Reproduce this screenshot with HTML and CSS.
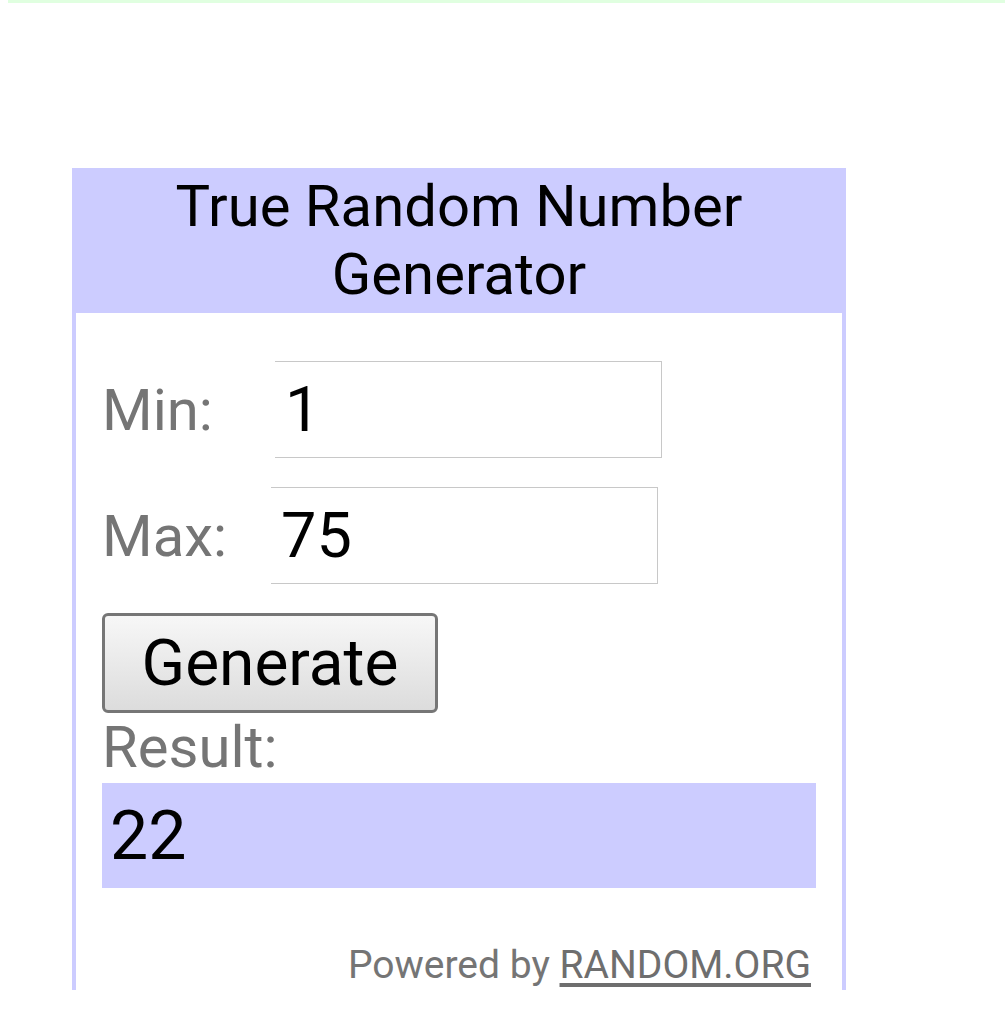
FILE: index.html
```html
<!DOCTYPE html>
<html lang="en">
<head>
    <meta charset="UTF-8">
    <meta name="viewport" content="width=device-width, initial-scale=1.0">
    <title>True Random Number Generator</title>
    <link rel="stylesheet" href="styles.css">
</head>
<body>
    <div class="top-strip"></div>
    <div class="widget">
        <div class="widget-header">True Random Number Generator</div>
        <div class="widget-body">
            <div class="field field-min">
                <label for="min">Min:</label>
                <input type="text" id="min" value="1">
            </div>
            <div class="field field-max">
                <label for="max">Max:</label>
                <input type="text" id="max" value="75">
            </div>
            <button class="generate">Generate</button>
            <div class="result-label">Result:</div>
            <div class="result">22</div>
            <div class="powered">Powered by <a href="#">RANDOM.ORG</a></div>
        </div>
    </div>
</body>
</html>
```

FILE: styles.css
```css
body {
    margin: 0;
    background-color: #ffffff;
    font-family: Roboto, 'Noto Sans', sans-serif;
    color: #000000;
}
.top-strip {
    height: 3px;
    margin-left: 8px;
    background-color: #e0ffe0;
}
.widget {
    width: 774px;
    height: 822px;
    margin: 165px 0 0 72px;
    box-sizing: border-box;
    border-left: 4px solid #ccccff;
    border-right: 4px solid #ccccff;
}
.widget-header {
    background-color: #ccccff;
    text-align: center;
    font-size: 58px;
    line-height: 68px;
    padding: 4px 20px 5px;
}
.widget-body {
    padding: 48px 26px 0;
}
.field {
    display: flex;
    align-items: center;
    margin-bottom: 29px;
}
.field label {
    color: #757575;
    font-size: 58px;
}
.field-min label {
    width: 173px;
}
.field-max label {
    width: 169px;
}
.field input {
    width: 387px;
    height: 97px;
    box-sizing: border-box;
    border: 1px solid #c8c8c8;
    border-left: none;
    padding: 0 10px;
    font-family: Roboto, 'Noto Sans', sans-serif;
    font-size: 63px;
    color: #000000;
    outline: none;
}
.generate {
    display: block;
    width: 336px;
    height: 100px;
    border: 3px solid #767676;
    border-radius: 6px;
    background: linear-gradient(#f7f7f7, #dcdcdc);
    font-family: Roboto, 'Noto Sans', sans-serif;
    font-size: 64px;
    color: #000000;
    padding: 0;
}
.result-label {
    color: #757575;
    font-size: 58px;
}
.result {
    display: flex;
    align-items: center;
    height: 105px;
    margin-top: 2px;
    padding-left: 8px;
    background-color: #ccccff;
    font-size: 68px;
}
.powered {
    margin-top: 54px;
    padding-right: 5px;
    text-align: right;
    color: #757575;
    font-size: 39px;
}
.powered a {
    color: #6e6e6e;
    text-decoration: underline;
    text-decoration-thickness: 4px;
    text-underline-offset: 5px;
}
```
